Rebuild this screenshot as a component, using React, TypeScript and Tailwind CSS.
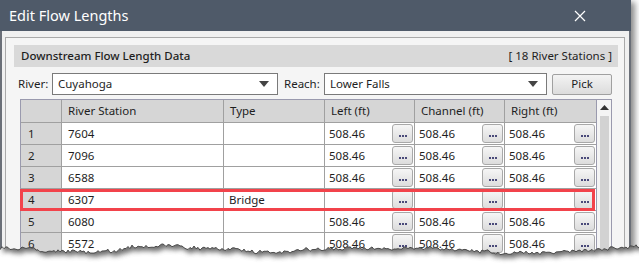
import React from "react";

const ROWS = [
  { n: "1", rs: "7604", type: "", v: "508.46" },
  { n: "2", rs: "7096", type: "", v: "508.46" },
  { n: "3", rs: "6588", type: "", v: "508.46" },
  { n: "4", rs: "6307", type: "Bridge", v: "" },
  { n: "5", rs: "6080", type: "", v: "508.46" },
  { n: "6", rs: "5572", type: "", v: "508.46" },
];

const COLS = "grid-cols-[41px_162px_101px_90px_90px_91px]";

function Ellipsis() {
  return (
    <div className="ml-auto mr-px flex h-[19px] w-[21px] items-end justify-center gap-[1px] rounded-[3px] border border-[#a8a8a8] bg-gradient-to-b from-[#f6f6f6] to-[#dcdcdc] pb-[5px]">
      <span className="h-[2px] w-[2px] bg-[#4a4a7a]" />
      <span className="h-[2px] w-[2px] bg-[#4a4a7a]" />
      <span className="h-[2px] w-[2px] bg-[#4a4a7a]" />
    </div>
  );
}

function ValueCell({ v }: { v: string }) {
  return (
    <div className="flex items-center border-r border-[#a0a0a0] pl-[4px]">
      <span>{v}</span>
      <Ellipsis />
    </div>
  );
}

function Combo({ text, width }: { text: string; width: string }) {
  return (
    <div className={`${width} flex h-[22px] items-center border border-[#7a7a7a] bg-white pl-[5px] pr-[8px]`}>
      <span className="flex-1">{text}</span>
      <svg width="10" height="6" viewBox="0 0 10 6">
        <path d="M0 0 H10 L5 6 Z" fill="#444" />
      </svg>
    </div>
  );
}

// deterministic jagged torn-paper edge
function tornPath() {
  let s = 11;
  const rnd = () => {
    s = (s * 9301 + 49297) % 233280;
    return s / 233280;
  };
  const pts: string[] = [];
  let drift = 0;
  for (let x = 0; x <= 640; x += 2) {
    drift += (rnd() - 0.5) * 1.6;
    if (drift < -3) drift = -3;
    if (drift > 3) drift = 3;
    const y = 248 + Math.sin(x / 37) * 2.5 + drift + (rnd() - 0.5) * 3.5;
    pts.push(`${x},${y.toFixed(1)}`);
  }
  return pts;
}

function TornEdge() {
  const pts = tornPath();
  const below = `M0,264 L${pts.join(" L")} L640,264 Z`;
  const above = `M0,0 L0,${pts[0].split(",")[1]} L${pts.join(" L")} L631,0 Z`;
  return (
    <svg className="pointer-events-none absolute left-0 top-0" width="639" height="264" viewBox="0 0 639 264">
      <defs>
        <clipPath id="below">
          <path d={below} />
        </clipPath>
        <filter id="blur" x="-10%" y="-10%" width="120%" height="130%">
          <feGaussianBlur stdDeviation="2.5" />
        </filter>
      </defs>
      <path d={below} fill="#ffffff" />
      <g clipPath="url(#below)">
        <path d={above} fill="#555" opacity="0.85" transform="translate(3,4)" filter="url(#blur)" />
      </g>
      <polyline points={pts.join(" ")} fill="none" stroke="#4a4a4a" strokeWidth="1" />
    </svg>
  );
}

export default function App() {
  return (
    <div className="relative h-[264px] w-[639px] overflow-hidden bg-white font-['Noto_Sans',sans-serif] text-[11.5px] text-[#1e1e1e]">
      {/* window */}
      <div className="h-[264px] w-[631px] shadow-[4px_2px_6px_rgba(0,0,0,0.45)]">
        {/* title bar */}
        <div className="flex h-[31px] items-center justify-between bg-[#4f5a69] pl-[9px] pr-[45px]">
          <span className="text-[14.5px] text-white">Edit Flow Lengths</span>
          <svg width="12" height="12" viewBox="0 0 12 12">
            <path d="M1 1 L11 11 M11 1 L1 11" stroke="#fff" strokeWidth="1.2" />
          </svg>
        </div>
        {/* body */}
        <div className="h-[233px] border-x-2 border-[#6a6f78] bg-[#f0f0f0] pl-[3px] pt-[6px]">
          <div className="h-[227px] w-[620px] border border-[#a9a9a9] bg-[#f5f5f5] pl-[8px] pt-[7px]">
            <div className="flex h-[22px] w-[604px] items-center justify-between bg-[#d9d9d9] pl-[7px] pr-[6px]">
              <span className="font-medium">Downstream Flow Length Data</span>
              <span>[ 18 River Stations ]</span>
            </div>

            <div className="mt-[6px] flex items-center">
              <span className="ml-[4px] w-[34px]">River:</span>
              <Combo text="Cuyahoga" width="w-[226px]" />
              <span className="ml-[6px] w-[40px]">Reach:</span>
              <Combo text="Lower Falls" width="w-[223px]" />
              <div className="ml-[5px] flex h-[21px] w-[60px] items-center justify-center rounded-[2px] border border-[#a0a0a0] bg-gradient-to-b from-[#f3f3f3] to-[#dcdcdc]">
                Pick
              </div>
            </div>

            {/* grid */}
            <div className="ml-[6px] mt-[4px] flex w-[592px] border-l border-t border-[#9a9aae]">
              <div className="w-[575px]">
                <div className={`grid ${COLS} h-[23px] border-b border-[#a0a0a0] bg-[#d6d6d6]`}>
                  <div className="border-r border-[#a0a0a0]" />
                  <div className="flex items-center border-r border-[#a0a0a0] pl-[6px]">River Station</div>
                  <div className="flex items-center border-r border-[#a0a0a0] pl-[6px]">Type</div>
                  <div className="flex items-center border-r border-[#a0a0a0] pl-[6px]">Left (ft)</div>
                  <div className="flex items-center border-r border-[#a0a0a0] pl-[6px]">Channel (ft)</div>
                  <div className="flex items-center pl-[6px]">Right (ft)</div>
                </div>
                {ROWS.map((r) => (
                  <div key={r.n} className={`grid ${COLS} h-[22px] border-b border-[#a0a0a0] bg-white`}>
                    <div className="flex items-center border-r border-[#a0a0a0] bg-[#d6d6d6] pl-[7px]">{r.n}</div>
                    <div className="flex items-center border-r border-[#a0a0a0] pl-[6px]">{r.rs}</div>
                    <div className="flex items-center border-r border-[#a0a0a0] pl-[5px]">{r.type}</div>
                    <ValueCell v={r.v} />
                    <ValueCell v={r.v} />
                    <div className="flex items-center pl-[4px]">
                      <span>{r.v}</span>
                      <Ellipsis />
                    </div>
                  </div>
                ))}
              </div>
              {/* scrollbar */}
              <div className="flex w-[17px] flex-col items-center border-x border-[#9a9aae] bg-[#f4f4f4]">
                <svg className="mt-[5px]" width="9" height="5" viewBox="0 0 9 5">
                  <path d="M0 5 L4.5 0 L9 5 Z" fill="#333" />
                </svg>
                <div className="mt-[6px] h-[160px] w-[9px] bg-[#d2d2d2]" />
              </div>
            </div>
          </div>
        </div>
      </div>

      {/* highlighted row */}
      <div className="absolute left-[20px] top-[189px] h-[22px] w-[575px] border-[3px] border-[#f2434b]" />

      <TornEdge />
    </div>
  );
}
